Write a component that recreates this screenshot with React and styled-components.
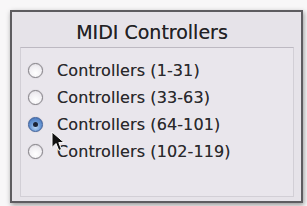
import React from "react";
import styled, { createGlobalStyle } from "styled-components";

const GlobalStyle = createGlobalStyle`
  html, body {
    margin: 0;
    padding: 0;
    background: #f8f7f8;
  }
  body {
    font-family: "DejaVu Sans", "Liberation Sans", sans-serif;
  }
`;

const Page = styled.div`
  width: 307px;
  height: 206px;
  padding: 10px 4px 3px 10px;
  box-sizing: border-box;
`;

const Window = styled.div`
  position: relative;
  width: 100%;
  height: 100%;
  box-sizing: border-box;
  background: #e6e3e9;
  border: 2px solid #5e5c60;
  box-shadow: 1px 2px 5px rgba(0, 0, 0, 0.4);
  display: flex;
  flex-direction: column;
  padding: 0 7px 4px 8px;
`;

const Title = styled.h1`
  margin: 0;
  height: 35px;
  display: flex;
  align-items: center;
  justify-content: center;
  font-size: 19px;
  font-weight: normal;
  color: #222124;
  text-shadow: 0 0 0.6px rgba(0, 0, 0, 0.5);
  padding: 4px 10px 0 0;
  box-sizing: border-box;
`;

const Group = styled.div`
  flex: 1;
  border: 1px solid #d2cfd6;
  border-top-color: #bdb9c2;
  background: #e9e6ec;
  display: flex;
  flex-direction: column;
  padding: 11px 0 0 7px;
  gap: 5px;
`;

const Row = styled.label`
  display: flex;
  align-items: center;
  height: 22px;
  gap: 14px;
  font-size: 16px;
  letter-spacing: 0.1px;
  color: #2a292c;
  text-shadow: 0 0 0.6px rgba(0, 0, 0, 0.45);
`;

const Radio = styled.span`
  width: 15px;
  height: 15px;
  flex: none;
  border-radius: 50%;
  box-sizing: border-box;
  display: flex;
  align-items: center;
  justify-content: center;
  border: 1.5px solid ${(p) => (p.$on ? "#3d5f9a" : "#838086")};
  background: ${(p) =>
    p.$on
      ? "radial-gradient(circle at 50% 70%, #b9d6f4 0%, #6b9ad6 45%, #3f6eb4 100%)"
      : "radial-gradient(circle at 50% 70%, #ffffff 0%, #f0eef2 60%, #d9d6dc 100%)"};
  box-shadow: 0 0 1px rgba(0, 0, 0, 0.3);
`;

const Dot = styled.span`
  width: 5px;
  height: 5px;
  border-radius: 50%;
  background: #1b2435;
`;

const Cursor = styled.svg`
  position: absolute;
  left: 39px;
  top: 119px;
`;

const items = [
  "Controllers (1-31)",
  "Controllers (33-63)",
  "Controllers (64-101)",
  "Controllers (102-119)",
];

export default function App() {
  return (
    <>
      <GlobalStyle />
      <Page>
        <Window>
          <Title>MIDI Controllers</Title>
          <Group>
            {items.map((t, i) => (
              <Row key={t}>
                <Radio $on={i === 2}>{i === 2 && <Dot />}</Radio>
                {t}
              </Row>
            ))}
          </Group>
          <Cursor width="15" height="22" viewBox="0 0 15 22">
            <path
              d="M1 1 L1 16.5 L5 12.5 L7.8 19.5 L10.5 18.4 L7.8 11.6 L13.2 11.6 Z"
              fill="#111"
              stroke="#fff"
              strokeWidth="1"
            />
          </Cursor>
        </Window>
      </Page>
    </>
  );
}
